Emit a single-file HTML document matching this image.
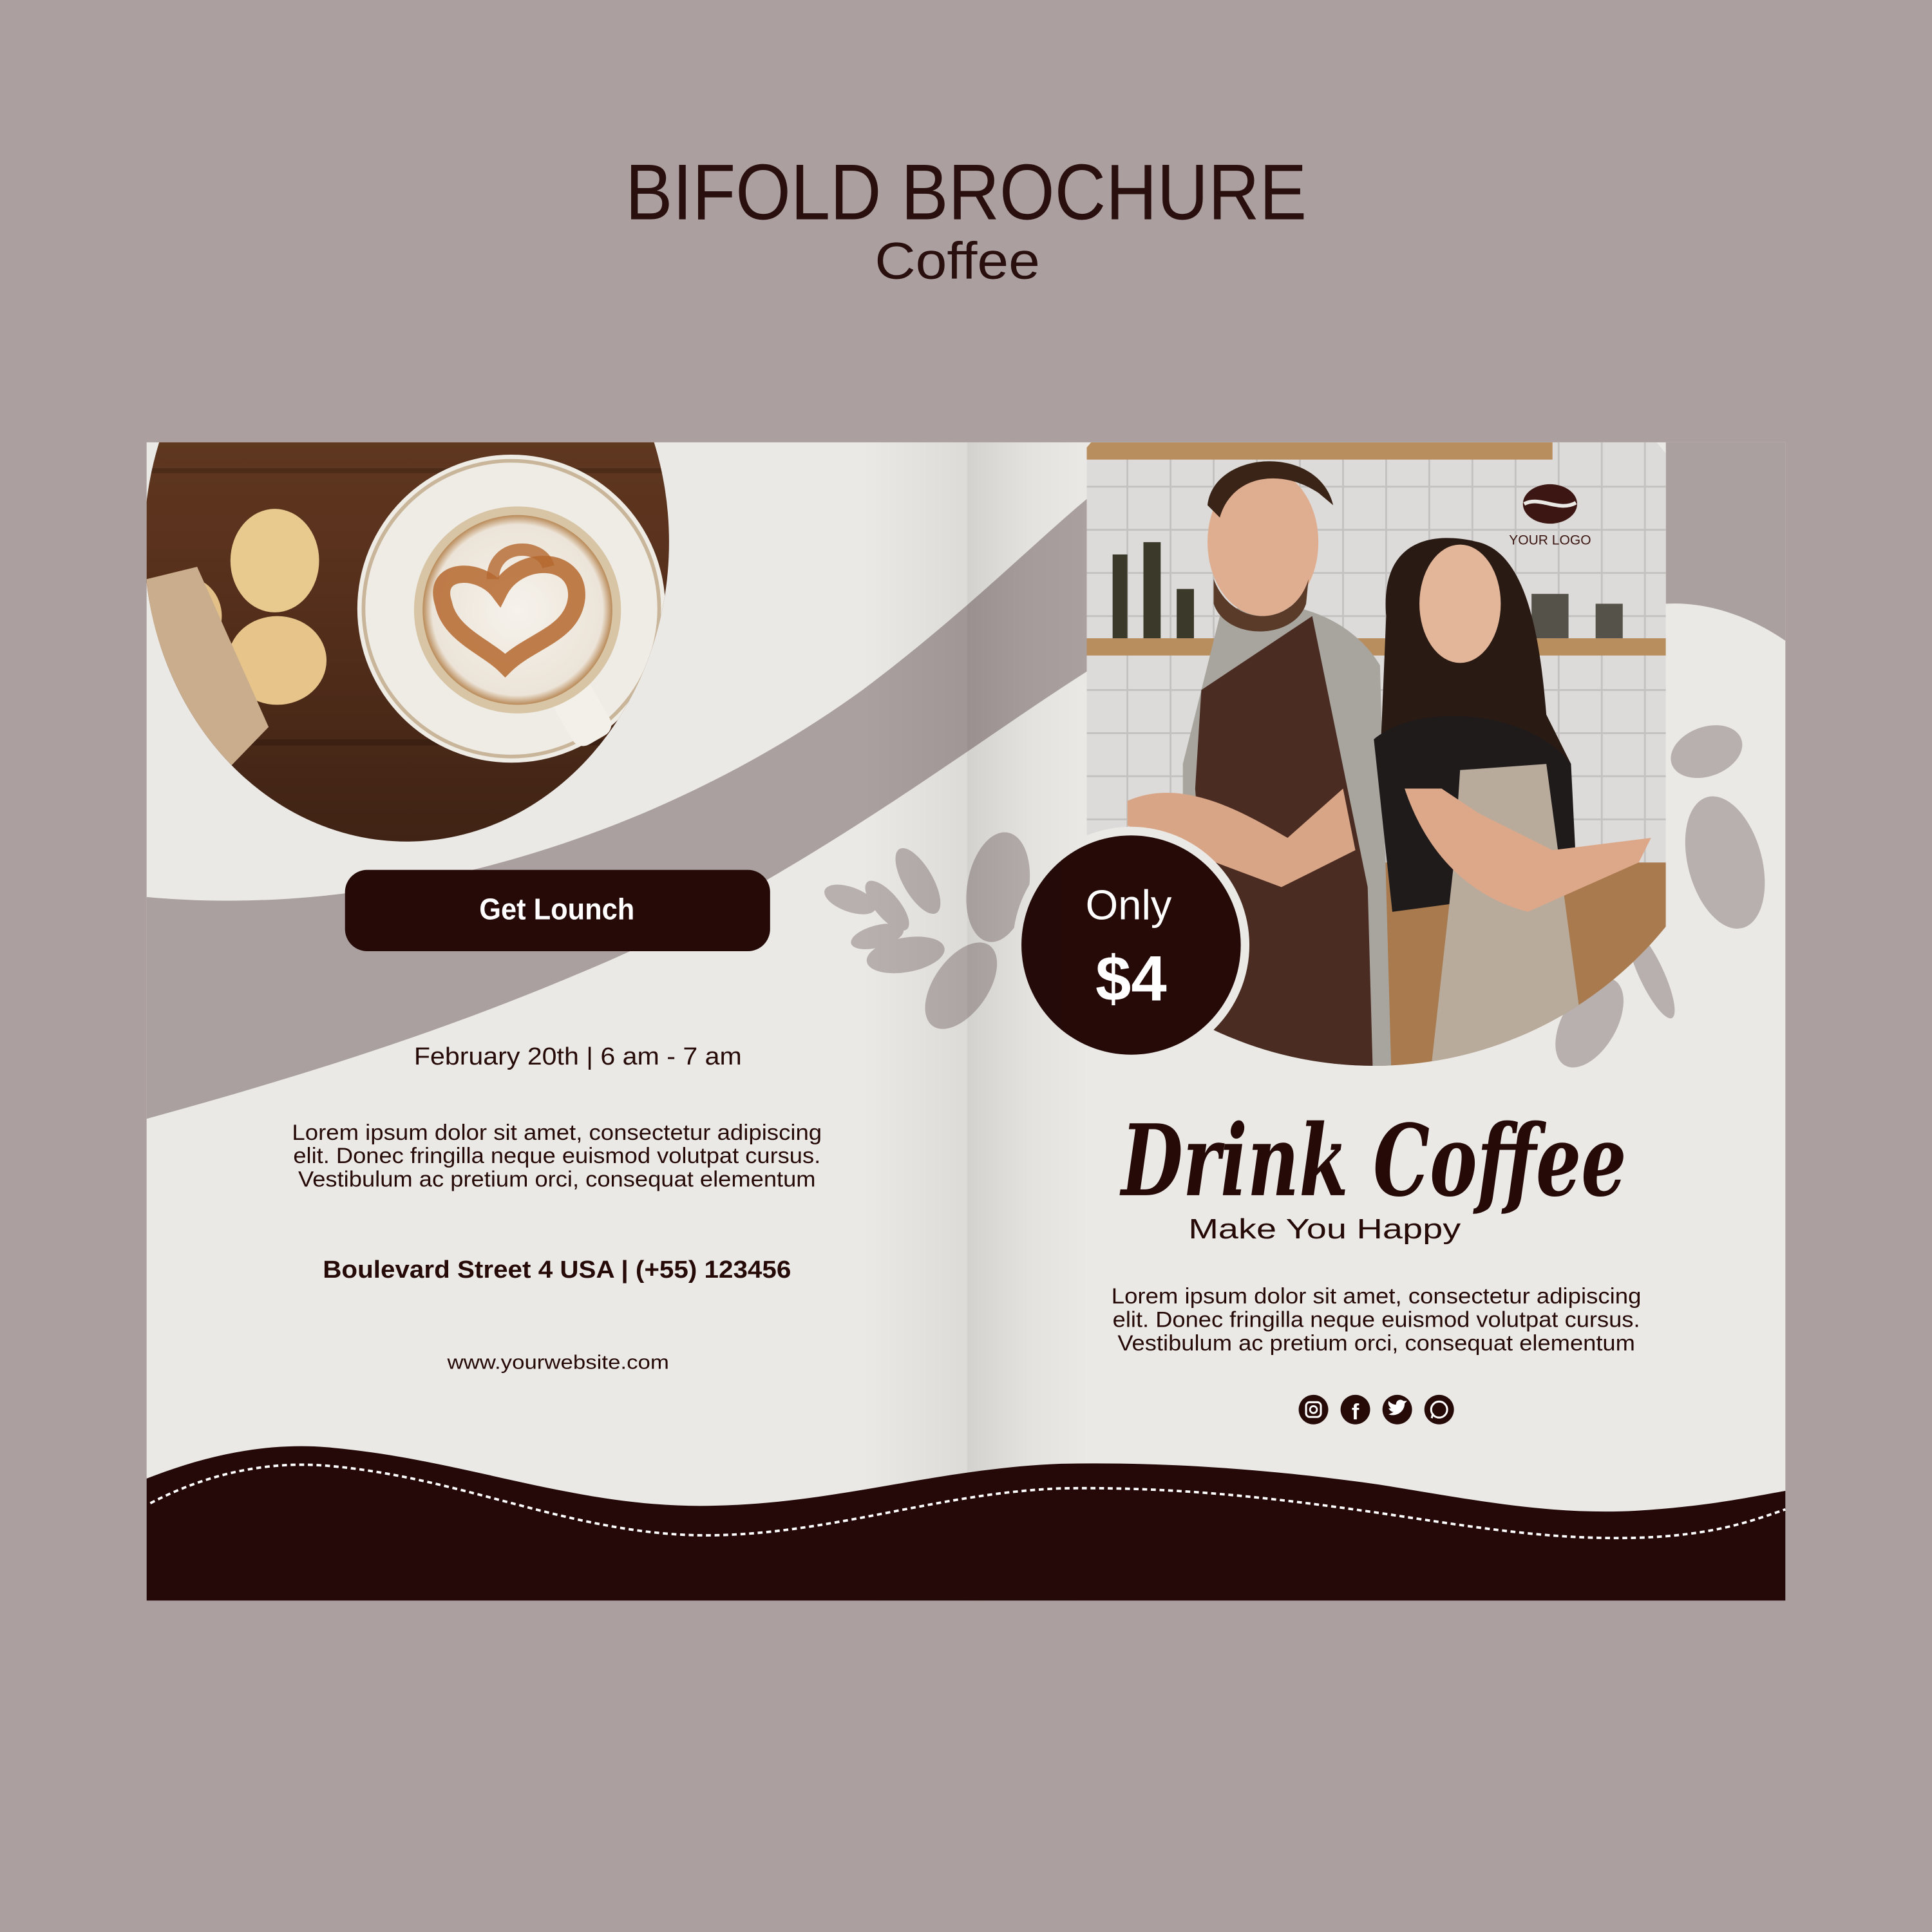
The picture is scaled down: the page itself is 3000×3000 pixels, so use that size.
<!DOCTYPE html>
<html><head><meta charset="utf-8"><style>
html,body{margin:0;padding:0;width:3000px;height:3000px;overflow:hidden;background:#aba09f}
svg{display:block}
</style></head><body>
<svg width="3000" height="3000" viewBox="0 0 1568 1568" xmlns="http://www.w3.org/2000/svg" font-family="Liberation Sans, sans-serif">
<defs>
<clipPath id="lp"><ellipse cx="330" cy="440" rx="213" ry="243"/></clipPath>
<clipPath id="lpr"><rect x="119" y="359" width="666" height="940"/></clipPath>
<clipPath id="rp"><circle cx="1115" cy="560" r="305"/></clipPath>
<clipPath id="rpr"><rect x="882" y="359" width="470" height="600"/></clipPath>
<linearGradient id="fold" x1="0" x2="1">
<stop offset="0" stop-color="#000" stop-opacity="0.10"/><stop offset="0.5" stop-color="#000" stop-opacity="0.03"/><stop offset="1" stop-color="#000" stop-opacity="0"/></linearGradient>
<linearGradient id="foldL" x1="0" x2="1">
<stop offset="0" stop-color="#000" stop-opacity="0"/><stop offset="1" stop-color="#000" stop-opacity="0.06"/></linearGradient>
<linearGradient id="wood" x1="0" y1="0" x2="0" y2="1">
<stop offset="0" stop-color="#6b4428"/><stop offset="0.5" stop-color="#5a321d"/><stop offset="1" stop-color="#3e2214"/></linearGradient>
<radialGradient id="foam" cx="0.5" cy="0.5" r="0.5"><stop offset="0" stop-color="#f6f2ec"/><stop offset="0.9" stop-color="#ece4d8"/><stop offset="1" stop-color="#b98a58"/></radialGradient>
</defs>
<rect width="1568" height="1568" fill="#aba09f"/>
<text x="784" y="178" text-anchor="middle" font-size="64" fill="#2a0f0f" textLength="553" lengthAdjust="spacingAndGlyphs">BIFOLD BROCHURE</text>
<text x="777" y="226" text-anchor="middle" font-size="42" fill="#2a0f0f" textLength="134" lengthAdjust="spacingAndGlyphs">Coffee</text>

<rect x="119" y="359" width="1330" height="940" fill="#ebe9e6"/>

<path d="M119 728 C300 745 520 690 700 560 C780 500 840 440 882 405 L882 545 C780 610 640 720 470 790 C340 845 220 880 119 908 Z" fill="#aaa09f"/>

<g clip-path="url(#lpr)"><g clip-path="url(#lp)">
<rect x="100" y="180" width="460" height="520" fill="url(#wood)"/>
<rect x="100" y="380" width="460" height="4" fill="#3a2010" opacity=".5"/>
<rect x="100" y="600" width="460" height="5" fill="#2f1a0e" opacity=".5"/>
<circle cx="415" cy="494" r="125" fill="#efece6"/>
<circle cx="415" cy="494" r="120" fill="none" stroke="#c9b59a" stroke-width="3"/>
<rect x="455" y="555" width="35" height="50" rx="10" fill="#f3f0ea" transform="rotate(-30 470 580)"/>
<circle cx="420" cy="495" r="84" fill="#d8c5a5"/>
<circle cx="420" cy="495" r="77" fill="url(#foam)"/>
<path d="M360 490 C350 460 390 460 405 480 C420 450 470 450 468 485 C465 515 430 520 410 540 C395 525 365 515 360 490Z" fill="none" stroke="#b5682f" stroke-width="14" opacity=".85"/>
<path d="M400 470 C400 440 440 440 445 460" fill="none" stroke="#b5682f" stroke-width="10" opacity=".8"/>
<ellipse cx="223" cy="455" rx="36" ry="42" fill="#e8c98e"/>
<ellipse cx="225" cy="536" rx="40" ry="36" fill="#e6c48a"/>
<ellipse cx="150" cy="500" rx="30" ry="32" fill="#e3c088"/>
<path d="M119 470 L160 460 L218 590 L160 650 L119 660Z" fill="#c9ad8c"/>
</g></g>

<rect x="280" y="706" width="345" height="66" rx="18" fill="#250a08"/>
<text x="452" y="746" text-anchor="middle" font-size="24" font-weight="bold" fill="#fff" textLength="126" lengthAdjust="spacingAndGlyphs">Get Lounch</text>

<g fill="#250a08" text-anchor="middle">
<text x="469" y="864" font-size="20" textLength="266" lengthAdjust="spacingAndGlyphs">February 20th | 6 am - 7 am</text>
<text x="452" y="925" font-size="18" textLength="430" lengthAdjust="spacingAndGlyphs">Lorem ipsum dolor sit amet, consectetur adipiscing</text>
<text x="452" y="944" font-size="18" textLength="428" lengthAdjust="spacingAndGlyphs">elit. Donec fringilla neque euismod volutpat cursus.</text>
<text x="452" y="963" font-size="18" textLength="420" lengthAdjust="spacingAndGlyphs">Vestibulum ac pretium orci, consequat elementum</text>
<text x="452" y="1037" font-size="20" font-weight="bold" textLength="380" lengthAdjust="spacingAndGlyphs">Boulevard Street 4 USA | (+55) 123456</text>
<text x="453" y="1111" font-size="16" textLength="180" lengthAdjust="spacingAndGlyphs">www.yourwebsite.com</text>
</g>

<path d="M1352 359 L1449 359 L1449 520 C1420 500 1385 488 1352 490Z" fill="#aaa09f"/>

<g fill="#b8b0ae">
<ellipse cx="745" cy="715" rx="12" ry="30" transform="rotate(-30 745 715)"/>
<ellipse cx="720" cy="735" rx="10" ry="25" transform="rotate(-40 720 735)"/>
<ellipse cx="690" cy="730" rx="22" ry="10" transform="rotate(20 690 730)"/>
<ellipse cx="712" cy="760" rx="22" ry="9" transform="rotate(-15 712 760)"/>
<ellipse cx="735" cy="775" rx="32" ry="14" transform="rotate(-10 735 775)"/>
<ellipse cx="780" cy="800" rx="40" ry="22" transform="rotate(-55 780 800)"/>
<ellipse cx="810" cy="720" rx="25" ry="45" transform="rotate(10 810 720)"/>
<ellipse cx="1385" cy="610" rx="30" ry="20" transform="rotate(-20 1385 610)"/>
<ellipse cx="1400" cy="700" rx="30" ry="55" transform="rotate(-15 1400 700)"/>
<ellipse cx="1290" cy="830" rx="22" ry="40" transform="rotate(30 1290 830)"/>
<ellipse cx="1340" cy="790" rx="10" ry="40" transform="rotate(-25 1340 790)"/>
</g>

<g clip-path="url(#rpr)"><g clip-path="url(#rp)">
<rect x="882" y="359" width="470" height="520" fill="#dddbd9"/>
<g stroke="#c4c2c0" stroke-width="1.5">
<path d="M882 395H1352M882 430H1352M882 465H1352M882 500H1352M882 560H1352M882 595H1352M882 630H1352M882 665H1352"/>
<path d="M915 359V700M950 359V700M985 359V700M1020 359V700M1055 359V700M1090 359V700M1125 359V700M1160 359V700M1195 359V700M1230 359V700M1265 359V700M1300 359V700M1335 359V700"/>
</g>
<rect x="882" y="359" width="378" height="14" fill="#b98e5f"/>
<rect x="882" y="518" width="470" height="14" fill="#b98e5f"/>
<g fill="#3b3a2a"><rect x="903" y="450" width="12" height="68"/><rect x="928" y="440" width="14" height="78"/><rect x="955" y="478" width="14" height="40"/><rect x="1243" y="482" width="30" height="36" fill="#55524a"/><rect x="1295" y="490" width="22" height="28" fill="#55524a"/></g>
<rect x="1110" y="700" width="242" height="180" fill="#a87a4e"/>
<path d="M990 500 C1020 480 1090 490 1120 540 L1130 900 L960 900 L960 620 Z" fill="#a8a59f"/>
<path d="M975 560 L1065 500 L1110 720 L1115 900 L990 900 L970 640Z" fill="#4a2c22"/>
<path d="M915 650 C960 630 1010 660 1045 680 L1090 640 L1100 690 L1040 720 L960 690 L915 670Z" fill="#d9a587"/>
<ellipse cx="1025" cy="440" rx="45" ry="60" fill="#dfae90"/>
<path d="M985 470 C1000 510 1050 510 1062 470 L1060 490 C1050 520 995 520 985 490Z" fill="#5a3a28"/>
<path d="M980 410 C985 365 1070 360 1082 410 L1070 400 C1040 380 1000 385 990 420Z" fill="#3a2418"/>
<path d="M1125 500 C1120 440 1160 430 1200 440 C1240 450 1250 520 1255 580 L1275 620 L1120 620Z" fill="#2a1a14"/>
<ellipse cx="1185" cy="490" rx="33" ry="48" fill="#e3b69a"/>
<path d="M1115 600 C1150 570 1240 575 1275 620 L1280 720 L1130 740 Z" fill="#1f1b1b"/>
<path d="M1185 625 L1255 620 L1290 880 L1160 880 L1180 700Z" fill="#b8ab9c"/>
<path d="M1140 640 C1160 700 1200 730 1240 740 L1330 700 L1340 680 L1260 690 L1200 660 L1170 640Z" fill="#dda889"/>
</g></g>

<ellipse cx="1258" cy="409" rx="22" ry="16" fill="#3b1612"/>
<path d="M1237 409 C1250 402 1265 416 1279 408" stroke="#ebe9e6" stroke-width="3" fill="none"/>
<text x="1258" y="442" text-anchor="middle" font-size="11" fill="#3b1612">YOUR LOGO</text>

<circle cx="918" cy="767" r="96" fill="#ebe9e6"/>
<circle cx="918" cy="767" r="89" fill="#250a08"/>
<text x="916" y="746" text-anchor="middle" font-size="34" fill="#fff">Only</text>
<text x="918" y="812" text-anchor="middle" font-size="52" font-weight="bold" fill="#fff">$4</text>

<text x="1115" y="970" text-anchor="middle" font-family="DejaVu Serif, serif" font-style="italic" font-weight="bold" font-size="80" fill="#250a08" textLength="410" lengthAdjust="spacingAndGlyphs">Drink Coffee</text>
<text x="1075" y="1005" text-anchor="middle" font-size="23" fill="#250a08" textLength="221" lengthAdjust="spacingAndGlyphs">Make You Happy</text>
<g fill="#250a08" text-anchor="middle">
<text x="1117" y="1058" font-size="18" textLength="430" lengthAdjust="spacingAndGlyphs">Lorem ipsum dolor sit amet, consectetur adipiscing</text>
<text x="1117" y="1077" font-size="18" textLength="428" lengthAdjust="spacingAndGlyphs">elit. Donec fringilla neque euismod volutpat cursus.</text>
<text x="1117" y="1096" font-size="18" textLength="420" lengthAdjust="spacingAndGlyphs">Vestibulum ac pretium orci, consequat elementum</text>
</g>
<g fill="#250a08"><circle cx="1066" cy="1144" r="12"/><circle cx="1100" cy="1144" r="12"/><circle cx="1134" cy="1144" r="12"/><circle cx="1168" cy="1144" r="12"/></g>
<rect x="1060" y="1138" width="12" height="12" rx="3" fill="none" stroke="#fff" stroke-width="1.6"/><circle cx="1066" cy="1144" r="2.8" fill="none" stroke="#fff" stroke-width="1.5"/>
<text x="1100" y="1152" text-anchor="middle" font-size="18" font-weight="bold" fill="#fff">f</text>
<path d="M1127 1148 C1133 1150 1140 1146 1140 1139 L1142 1137 L1139 1137 C1137 1135 1133 1136 1133 1140 C1130 1140 1128 1138 1127 1137 C1126 1140 1128 1142 1129 1143 L1127 1143 C1128 1145 1130 1146 1131 1146Z" fill="#fff"/>
<circle cx="1168" cy="1144" r="6.5" fill="none" stroke="#fff" stroke-width="1.6"/><path d="M1162 1151 L1163 1147" stroke="#fff" stroke-width="1.6"/>

<rect x="700" y="359" width="85" height="940" fill="url(#foldL)"/>
<rect x="785" y="359" width="100" height="940" fill="url(#fold)"/>

<path d="M119 1200 C170 1180 220 1170 270 1175 C380 1185 470 1225 580 1222 C680 1220 760 1192 860 1188 C960 1186 1050 1195 1120 1205 C1200 1218 1260 1230 1330 1226 C1390 1222 1420 1215 1449 1210 L1449 1299 L119 1299Z" fill="#250908"/>
<path d="M122 1220 C170 1195 220 1185 270 1190 C380 1200 470 1248 580 1246 C680 1244 760 1212 860 1208 C960 1206 1050 1218 1120 1228 C1200 1240 1260 1250 1330 1248 C1390 1246 1420 1235 1449 1225" fill="none" stroke="#fff" stroke-width="2" stroke-dasharray="4 3"/>
</svg>
</body></html>
